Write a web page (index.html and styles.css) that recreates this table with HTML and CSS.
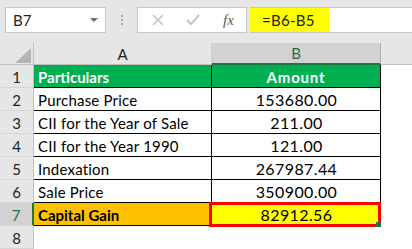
FILE: index.html
```html
<!DOCTYPE html>
<html>
<head>
<meta charset="utf-8">
<link rel="stylesheet" href="styles.css">
</head>
<body>
<div class="toolbar">
  <div class="namebox"><span>B7</span><span class="caret"></span></div>
  <div class="sep"><i></i><i></i><i></i></div>
  <div class="fxbox">
    <svg class="ico-x" width="12" height="12" viewBox="0 0 12 12"><path d="M1 1L11 11M11 1L1 11" stroke="#c4c4c4" stroke-width="1.6" fill="none"/></svg>
    <svg class="ico-check" width="14" height="12" viewBox="0 0 14 12"><path d="M1 6L5 10L13 1" stroke="#c4c4c4" stroke-width="2" fill="none"/></svg>
    <span class="fx">fx</span>
  </div>
  <div class="formula"><span class="hl">=B6-B5</span></div>
</div>
<div class="sheet">
  <div class="corner"><span class="tri"></span></div>
  <div class="colhead">A</div>
  <div class="colhead sel">B</div>
  <div class="colfill"></div>

  <div class="rowhead">1</div>
  <div class="cell a hdr">Particulars</div>
  <div class="cell b hdr">Amount</div>
  <div class="blank"></div>

  <div class="rowhead">2</div>
  <div class="cell a">Purchase Price</div>
  <div class="cell b num">153680.00</div>
  <div class="blank"></div>

  <div class="rowhead">3</div>
  <div class="cell a">CII for the Year of Sale</div>
  <div class="cell b num">211.00</div>
  <div class="blank"></div>

  <div class="rowhead">4</div>
  <div class="cell a">CII for the Year 1990</div>
  <div class="cell b num">121.00</div>
  <div class="blank"></div>

  <div class="rowhead">5</div>
  <div class="cell a">Indexation</div>
  <div class="cell b num">267987.44</div>
  <div class="blank"></div>

  <div class="rowhead">6</div>
  <div class="cell a">Sale Price</div>
  <div class="cell b num">350900.00</div>
  <div class="blank"></div>

  <div class="rowhead sel">7</div>
  <div class="cell a gain">Capital Gain</div>
  <div class="cell b num result">82912.56<span class="selbox"></span><span class="handle"></span></div>
  <div class="blank"></div>

  <div class="rowhead">8</div>
  <div class="empty"></div>
  <div class="empty"></div>
  <div class="blank"></div>
</div>
</body>
</html>
```
FILE: styles.css
```css
* { box-sizing: border-box; }
html, body { margin: 0; padding: 0; }
body {
  width: 412px;
  height: 249px;
  overflow: hidden;
  background: #ffffff;
  font-family: Lato, "Open Sans", sans-serif;
  font-size: 15px;
  color: #000;
}
.toolbar {
  height: 43px;
  background: #e6e6e6;
  display: flex;
  align-items: flex-start;
  padding-top: 7px;
}
.namebox {
  margin-left: 5px;
  width: 101px;
  height: 26px;
  background: #fff;
  border: 1px solid #c6c6c6;
  display: flex;
  align-items: center;
  justify-content: space-between;
  padding: 0 7px 0 7px;
  color: #222;
}
.caret {
  width: 0; height: 0;
  border-left: 4px solid transparent;
  border-right: 4px solid transparent;
  border-top: 4px solid #6d6d6d;
}
.sep {
  width: 31px;
  height: 26px;
  display: flex;
  flex-direction: column;
  align-items: center;
  justify-content: center;
  gap: 2px;
}
.sep i {
  display: block;
  width: 2px; height: 2px;
  background: #a8a8a8;
}
.fxbox {
  width: 110px;
  height: 26px;
  background: #fff;
  border: 1px solid #c6c6c6;
  display: flex;
  align-items: center;
  padding-left: 14px;
}
.ico-x { margin-right: 22px; }
.ico-check { margin-right: 23px; }
.fx {
  font-family: "Liberation Serif", serif;
  font-style: italic;
  font-size: 15px;
  color: #5b5b5b;
}
.formula {
  flex: 1;
  margin-left: 3px;
  height: 26px;
  background: #fff;
  border-top: 1px solid #c6c6c6;
  border-bottom: 1px solid #c6c6c6;
}
.hl {
  display: flex;
  align-items: center;
  width: 79px;
  height: 24px;
  background: #ffff00;
  padding-left: 12px;
  color: #222;
  letter-spacing: 0.3px;
}
.sheet {
  display: grid;
  grid-template-columns: 34px 178px 169px 1fr;
  grid-template-rows: 22px repeat(8, 23px);
}
.corner {
  position: relative;
  background: #e6e6e6;
  border-right: 1px solid #bfbfbf;
  border-bottom: 1px solid #bfbfbf;
}
.tri {
  position: absolute;
  left: 15px;
  top: 5px;
  width: 0; height: 0;
  border-left: 16px solid transparent;
  border-bottom: 15px solid #b4b4b4;
}
.colhead {
  background: #e6e6e6;
  border-bottom: 1px solid #bfbfbf;
  border-right: 1px solid #d0d0d0;
  display: flex;
  align-items: center;
  justify-content: center;
  color: #222;
}
.colhead.sel {
  background: #d2d2d2;
  color: #1e6b45;
  border-bottom: 2px solid #217346;
  border-right: 1px solid #ababab;
}
.colfill {
  background: #e6e6e6;
  border-bottom: 1px solid #bfbfbf;
}
.rowhead {
  background: #e6e6e6;
  border-right: 1px solid #bfbfbf;
  border-bottom: 1px solid #d6d6d6;
  display: flex;
  align-items: center;
  justify-content: center;
  color: #222;
  padding-top: 1px;
}
.rowhead.sel {
  background: #d2d2d2;
  color: #1e6b45;
  border-right: 2px solid #217346;
}
.cell {
  display: flex;
  align-items: center;
  border-bottom: 1px solid #000;
  border-right: 1px solid #000;
  padding-top: 1px;
  white-space: nowrap;
  letter-spacing: 0.2px;
}
.cell.a { padding-left: 4px; }
.cell.b { justify-content: center; }
.cell.num { font-size: 16px; letter-spacing: 0.4px; padding-left: 1px; }
.cell.hdr {
  background: #00b050;
  color: #fff;
  font-weight: bold;
  letter-spacing: 0;
}
.cell.b.hdr { font-size: 15px; letter-spacing: 0.8px; }
.cell.gain {
  background: #ffc000;
  font-weight: bold;
  letter-spacing: 0;
}
.cell.result {
  background: #ffff00;
  position: relative;
}
.selbox {
  position: absolute;
  left: -3px;
  top: -1px;
  right: -1px;
  bottom: -2px;
  border: 3px solid #ff0000;
}
.handle {
  position: absolute;
  right: -1px;
  bottom: -2px;
  width: 5px;
  height: 5px;
  background: #217346;
}
.blank, .empty { background: #fff; }
```
